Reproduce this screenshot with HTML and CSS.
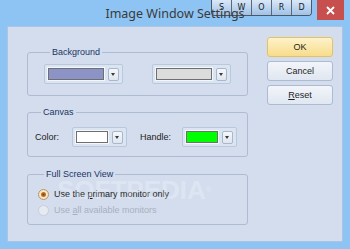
FILE: index.html
```html
<!DOCTYPE html>
<html>
  <head>
    <title>Image Window Settings</title>
    <link rel="stylesheet" href="styles.css">
  </head>
  <body>
    <div class="window">
      <div class="titlebar">
        <span class="title">Image Window Settings</span>
        <div class="sword">
          <span>S</span><span>W</span><span>O</span><span>R</span><span>D</span>
        </div>
        <div class="close">
          <svg width="9" height="9" viewBox="0 0 9 9"><path d="M1 1 L8 8 M8 1 L1 8" stroke="#fff" stroke-width="1.8" fill="none"/></svg>
        </div>
      </div>

      <div class="client">
        <div class="groups">
          <fieldset class="group group-bg">
            <legend>Background</legend>
            <div class="row">
              <div class="combo"><span class="swatch swatch-wide swatch-purple"></span><span class="drop"></span></div>
              <div class="combo combo-second"><span class="swatch swatch-wide swatch-gray"></span><span class="drop"></span></div>
            </div>
          </fieldset>

          <fieldset class="group group-canvas">
            <legend>Canvas</legend>
            <div class="row">
              <span class="field-label label-color">Color:</span>
              <div class="combo"><span class="swatch swatch-small swatch-white"></span><span class="drop"></span></div>
              <span class="field-label label-handle">Handle:</span>
              <div class="combo"><span class="swatch swatch-small swatch-green"></span><span class="drop"></span></div>
            </div>
          </fieldset>

          <fieldset class="group group-full">
            <legend>Full Screen View</legend>
            <div class="radio-row">
              <span class="radio checked"></span>
              <span>Use the <u>p</u>rimary monitor only</span>
            </div>
            <div class="radio-row disabled">
              <span class="radio"></span>
              <span>Use <u>a</u>ll available monitors</span>
            </div>
          </fieldset>
        </div>

        <div class="buttons">
          <button class="btn btn-default">OK</button>
          <button class="btn">Cancel</button>
          <button class="btn"><u>R</u>eset</button>
        </div>

        <div class="watermark">SOFTPEDIA<sup>®</sup></div>
      </div>
    </div>
  </body>
</html>
```

FILE: styles.css
```css
body {
  margin: 0;
  font-family: "Liberation Sans", Arial, sans-serif;
  font-size: 9px;
  color: #1e1e1e;
}
.window {
  width: 350px;
  height: 249px;
  background-color: #8dc4f4;
  position: relative;
  overflow: hidden;
}

/* title bar */
.titlebar {
  height: 26px;
  position: relative;
}
.title {
  display: block;
  position: relative;
  z-index: 2;
  text-align: center;
  font-family: "Noto Sans", sans-serif;
  font-size: 12.5px;
  line-height: 27px;
  color: #3a3a3a;
}
.sword {
  position: absolute;
  left: 211px;
  top: 0;
  display: flex;
  height: 15px;
  border: 1px solid #4e5764;
  border-top: none;
  border-radius: 0 0 4px 4px;
  overflow: hidden;
}
.sword span {
  width: 19px;
  text-align: center;
  font-family: "DejaVu Sans", sans-serif;
  font-size: 8px;
  line-height: 15px;
  color: #1a1a1a;
  background: linear-gradient(#d9e8f8, #9fc2e8);
  border-left: 1px solid #5d6775;
}
.sword span:first-child {
  border-left: none;
}
.close {
  position: absolute;
  right: 6px;
  top: 0;
  width: 27px;
  height: 20px;
  background-color: #c7504f;
  display: flex;
  align-items: center;
  justify-content: center;
}

/* client area */
.client {
  margin: 0 7px;
  height: 216px;
  box-sizing: border-box;
  border: 1px solid #a9c4e4;
  background-color: #d3ddee;
  display: flex;
  padding: 10px 0 0 19px;
  position: relative;
}
.groups {
  width: 221px;
  padding-top: 9px;
}
.group {
  margin: 0;
  min-width: 0;
  border: 1px solid #aebcd2;
  border-radius: 3px;
}
.group legend {
  padding: 0 2px;
  margin-left: 6px;
  line-height: 13px;
  color: #1d3461;
}
.group-bg {
  padding: 5px 0 11px 16px;
}
.group-canvas {
  margin-top: 10px;
  padding: 8px 0 9px 7px;
}
.group-full {
  margin-top: 11px;
  padding: 5px 0 6px 10px;
}
.row {
  display: flex;
  align-items: center;
}

/* colour combos */
.combo {
  display: flex;
  align-items: center;
  gap: 4px;
  height: 20px;
  box-sizing: border-box;
  padding: 3px;
  border: 1px solid #bac8dd;
  border-radius: 2px;
  background-color: #dbe4f1;
}
.combo-second {
  margin-left: 29px;
}
.swatch {
  height: 12px;
  box-sizing: border-box;
  border: 1px solid #6f6f6f;
  box-shadow: 0 0 0 1px #f3f6fb;
}
.swatch-wide {
  width: 56px;
}
.swatch-small {
  width: 32px;
}
.swatch-purple {
  background-color: #8c93c6;
}
.swatch-gray {
  background-color: #dcdcdc;
}
.swatch-white {
  background-color: #ffffff;
}
.swatch-green {
  background-color: #00ff00;
}
.drop {
  width: 11px;
  height: 13px;
  box-sizing: border-box;
  border: 1px solid #a9b7cc;
  border-radius: 2px;
  background: linear-gradient(#f5f7fb, #e0e6ef);
  position: relative;
}
.drop::after {
  content: "";
  position: absolute;
  left: 2px;
  top: 4px;
  border-left: 2.5px solid transparent;
  border-right: 2.5px solid transparent;
  border-top: 3px solid #3a3a3a;
}
.field-label {
  color: #222;
}
.label-color {
  width: 37px;
}
.label-handle {
  width: 42px;
  margin-left: 13px;
}

/* radios */
.radio-row {
  display: flex;
  align-items: center;
  gap: 5px;
  height: 16px;
  color: #1e1e1e;
}
.radio-row.disabled {
  color: #a8b0be;
}
.radio {
  width: 11px;
  height: 11px;
  box-sizing: border-box;
  border-radius: 50%;
  border: 1px solid #b99866;
  background: radial-gradient(circle, #fff6e6, #f1d9b5);
  position: relative;
}
.radio.checked::after {
  content: "";
  position: absolute;
  left: 2px;
  top: 2px;
  width: 5px;
  height: 5px;
  border-radius: 50%;
  background: radial-gradient(circle, #8a4a14, #e38a2c);
}
.disabled .radio {
  border-color: #c8cfda;
  background: #e6ebf2;
}

/* buttons */
.buttons {
  margin-left: 19px;
  width: 66px;
  display: flex;
  flex-direction: column;
  gap: 4px;
}
.btn {
  height: 20px;
  padding: 0;
  font-family: "Liberation Sans", Arial, sans-serif;
  font-size: 9px;
  color: #1e1e1e;
  border: 1px solid #adbbd0;
  border-radius: 3px;
  background: linear-gradient(#f2f5fa, #e0e7f1);
}
.btn-default {
  border-color: #e3c266;
  background: linear-gradient(#fdf2c9, #f8dc8a);
}

.watermark {
  position: absolute;
  left: 49px;
  top: 150px;
  font-family: "Liberation Sans", Arial, sans-serif;
  font-weight: bold;
  font-size: 26px;
  line-height: 26px;
  color: rgba(255, 255, 255, 0.25);
  pointer-events: none;
}
.watermark sup {
  font-size: 8px;
  vertical-align: top;
}
```
